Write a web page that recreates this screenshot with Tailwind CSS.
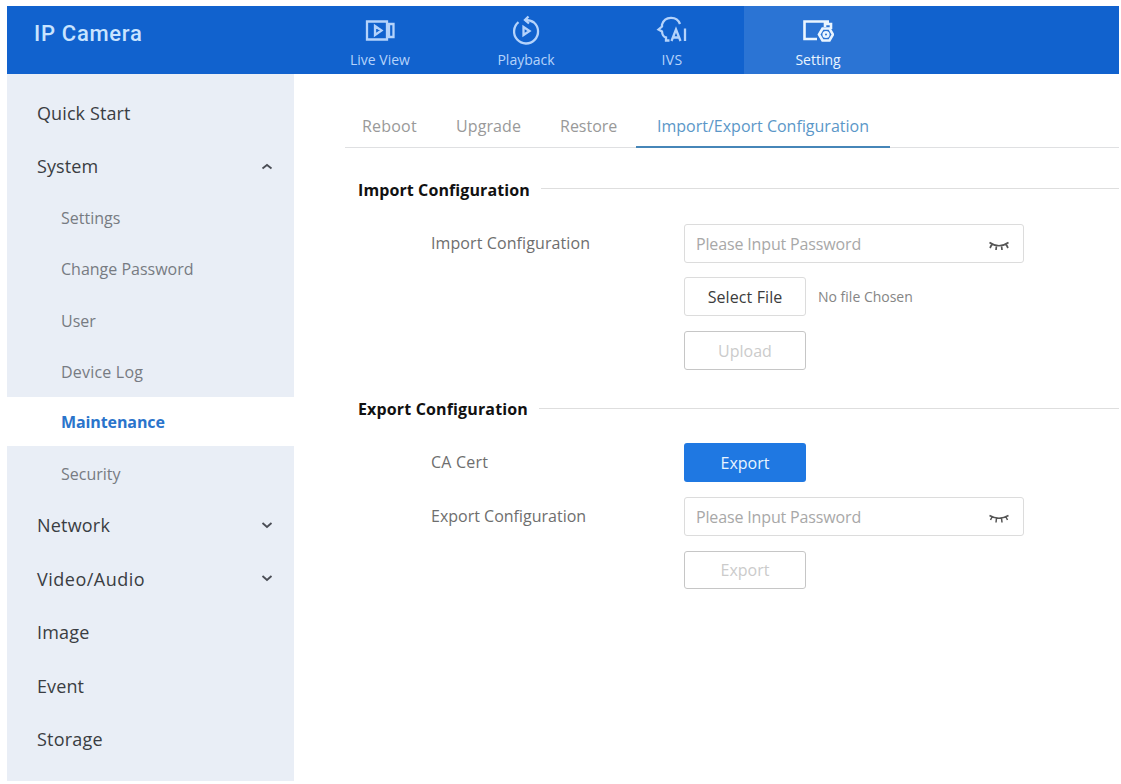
<!DOCTYPE html>
<html lang="en">
<head>
  <meta charset="UTF-8">
  <meta name="viewport" content="width=device-width, initial-scale=1.0">
  <title>IP Camera</title>
  <script src="https://cdn.jsdelivr.net/npm/@tailwindcss/browser@4"></script>
</head>
<body class="bg-white font-['Open_Sans','Noto_Sans',sans-serif] w-[1121px] h-[784px] overflow-hidden">
  <div class="ml-[7px] mt-[6px] w-[1112px]">

    <!-- Header -->
    <header class="flex h-[68px] bg-[#1162ce] text-[#b5d3fb]">
      <h1 class="w-[299px] pl-[27px] pt-[14px] font-['Roboto',sans-serif] font-medium text-[22px] leading-7 tracking-[0.7px] text-[#c9e4ff]">IP Camera</h1>
      <nav class="flex ml-[-8px]">
        <a class="w-[146px] ml-2 flex flex-col items-center pl-[2px] pt-[9px]">
          <svg class="w-8 h-8" viewBox="0 0 32 32" fill="none" stroke="currentColor" stroke-width="2.300">
            <path d="M3 6.500h20v18H3zM11 11v9l6.500-4.500z M25 9h4.500v13H25z" />
          </svg>
          <span class="mt-[3px] text-[14px] leading-5">Live View</span>
        </a>
        <a class="w-[146px] flex flex-col items-center pl-[2px] pt-[9px]">
          <svg class="w-8 h-8" viewBox="0 0 32 32" fill="none" stroke="currentColor" stroke-width="2.300">
            <path d="M8.500 7.200A12 12 0 1 0 24 7.500Q20.500 5 15 5M13.500 12v8l6-4z" />
            <path d="M18.500 1.500L15 5l4 3.500" />
          </svg>
          <span class="mt-[3px] text-[14px] leading-5">Playback</span>
        </a>
        <a class="w-[146px] flex flex-col items-center pl-[2px] pt-[9px]">
          <svg class="w-8 h-8" viewBox="0 0 32 32" fill="none" stroke="currentColor" stroke-width="2.300">
            <path d="M24 9A9.500 9.500 0 0 0 6 9.500v2L2.500 14.500L6 16.500Q6.500 22 10 22.500V25.500h3.500" />
            <path d="M15.500 26l4.500-11.500L24.500 26M17 22.500h6M29 13.500V26" />
          </svg>
          <span class="mt-[3px] text-[14px] leading-5 tracking-[0.4px]">IVS</span>
        </a>
        <a class="w-[146px] flex flex-col items-center pl-[2px] pt-[9px] bg-[#2b74d4] text-[#eaf5ff]">
          <svg class="w-8 h-8" viewBox="0 0 32 32" fill="none" stroke="currentColor" stroke-width="2.600">
            <path d="M15 24H2.500V6.500H27M23 12V9h6v5" />
            <path d="M20.500 13.500h7L31 19.500l-3.500 6h-7L17 19.500z" />
            <circle cx="24" cy="19.500" r="2.300" />
          </svg>
          <span class="mt-[3px] text-[14px] leading-5 font-medium">Setting</span>
        </a>
      </nav>
    </header>

    <div class="flex">
      <!-- Sidebar -->
      <aside class="w-[287px] h-[707px] shrink-0 bg-[#e9eef6] pt-3 text-[18px] tracking-[0.1px] text-[#3a3d42]">
        <div class="h-[54px] flex items-center pl-[30px]"><span>Quick Start</span></div>
        <div class="h-[53px] flex items-center justify-between pl-[30px] pr-[21px]">
          <span>System</span>
          <svg class="w-3 h-3" viewBox="0 0 12 12" fill="none" stroke="#4a4d55" stroke-width="1.800"><path d="M1.500 7.500L6 4l4.500 3.500" /></svg>
        </div>
        <div class="text-[16px] tracking-normal text-[#777b82]">
          <div class="h-[51px] flex items-center pl-[54px] pb-[2px]"><span>Settings</span></div>
          <div class="h-[51px] flex items-center pl-[54px] pb-[2px]"><span>Change Password</span></div>
          <div class="h-[51px] flex items-center pl-[54px]"><span>User</span></div>
          <div class="h-[51px] flex items-center pl-[54px]"><span class="tracking-[0.2px]">Device Log</span></div>
          <div class="h-[49px] mb-[2px] flex items-center pl-[54px] bg-white font-bold text-[#2a74cb]"><span class="tracking-[-0.1px]">Maintenance</span></div>
          <div class="h-[51px] flex items-center pl-[54px]"><span>Security</span></div>
        </div>
        <div class="h-[53.5px] flex items-center justify-between pl-[30px] pr-[21px]">
          <span class="tracking-[0.2px]">Network</span>
          <svg class="w-3 h-3 mb-[2px]" viewBox="0 0 12 12" fill="none" stroke="#4a4d55" stroke-width="1.800"><path d="M1.500 4L6 8l4.500-4" /></svg>
        </div>
        <div class="h-[53.5px] flex items-center justify-between pl-[30px] pr-[21px]">
          <span class="tracking-[0.5px]">Video/Audio</span>
          <svg class="w-3 h-3 mb-[2px]" viewBox="0 0 12 12" fill="none" stroke="#4a4d55" stroke-width="1.800"><path d="M1.500 4L6 8l4.500-4" /></svg>
        </div>
        <div class="h-[53.5px] flex items-center pl-[30px]"><span class="tracking-[0.2px]">Image</span></div>
        <div class="h-[53.5px] flex items-center pl-[30px]"><span>Event</span></div>
        <div class="h-[53.5px] flex items-center pl-[30px]"><span class="tracking-[0.2px]">Storage</span></div>
      </aside>

      <!-- Content -->
      <main class="w-[774px] ml-[51px] pt-[31px]">
        <div class="flex h-[43px] border-b border-[#dfe0e2] text-[16px] leading-[42px] text-[#999]">
          <a class="w-[94px] pl-[17px] tracking-[0.2px]">Reboot</a>
          <a class="w-[104px] pl-[17px] tracking-[0.1px]">Upgrade</a>
          <a class="w-[93px] pl-[17px]">Restore</a>
          <a class="w-[254px] h-[43px] text-center border-b-2 border-[#4686b8] text-[#5b97c8]">Import/Export Configuration</a>
        </div>

        <section class="mt-[30px]">
          <div class="flex items-center gap-[11px] pl-[13px]">
            <h2 class="text-[16px] leading-6 font-bold tracking-[0.1px] text-[#111]">Import Configuration</h2>
            <div class="flex-1 h-px mb-[3px] bg-[#dedede]"></div>
          </div>
          <div class="flex mt-[22px]">
            <div class="w-[339px] pl-[86px] text-[16px] leading-[39px] tracking-[0.1px] text-[#6e6e6e]"><span>Import Configuration</span></div>
            <div class="flex flex-col">
              <div class="w-[340px] h-[39px] flex items-center justify-between border border-[#dcdcdc] rounded-[3px] pl-[11px] pr-[13px] text-[16px] tracking-[-0.15px] text-[#a8a8a8]">
                <span>Please Input Password</span>
                <svg class="w-[22px] h-3 mt-[5px]" viewBox="0 0 22 12" fill="none" stroke="#555" stroke-width="1.700"><path d="M1.500 2.500Q11 9 20.500 2.500M4 4L2 8M8.500 5.500L8 10M13.500 5.500L14 10M18 4l2 4" /></svg>
              </div>
              <div class="flex items-center mt-[14px]">
                <button class="w-[122px] h-[39px] border border-[#dcdcdc] rounded-[3px] text-[16px] tracking-[0.1px] text-[#3c3c3c]">Select File</button>
                <span class="ml-3 text-[14px] text-[#858585]">No file Chosen</span>
              </div>
              <button class="mt-[15px] w-[122px] h-[39px] border border-[#c6c6c6] rounded-[3px] text-[16px] text-[#cbcbcb]">Upload</button>
            </div>
          </div>
        </section>

        <section class="mt-[27px]">
          <div class="flex items-center gap-[11px] pl-[13px]">
            <h2 class="text-[16px] leading-6 font-bold tracking-[0.15px] text-[#111]">Export Configuration</h2>
            <div class="flex-1 h-px mb-[2px] bg-[#dedede]"></div>
          </div>
          <div class="flex mt-[22px]">
            <div class="w-[339px] pl-[86px] flex flex-col gap-[15px] text-[16px] leading-[39px] text-[#6e6e6e]">
              <span class="tracking-[0.2px]">CA Cert</span>
              <span>Export Configuration</span>
            </div>
            <div class="flex flex-col gap-[15px]">
              <button class="w-[122px] h-[39px] bg-[#1f78e2] rounded-[3px] text-[16px] text-[#e8f4ff]">Export</button>
              <div class="w-[340px] h-[39px] flex items-center justify-between border border-[#dcdcdc] rounded-[3px] pl-[11px] pr-[13px] text-[16px] tracking-[-0.15px] text-[#a8a8a8]">
                <span>Please Input Password</span>
                <svg class="w-[22px] h-3 mt-[5px]" viewBox="0 0 22 12" fill="none" stroke="#555" stroke-width="1.500"><path d="M1.500 2.500Q11 8 20.500 2.500M4 4L2.500 7M8.500 5L8 9.500M13.500 5L14 9.500M18 4l1.500 3" /></svg>
              </div>
              <button class="w-[122px] h-[38px] border border-[#c6c6c6] rounded-[3px] text-[16px] text-[#cbcbcb]">Export</button>
            </div>
          </div>
        </section>
      </main>
    </div>
  </div>
</body>
</html>
